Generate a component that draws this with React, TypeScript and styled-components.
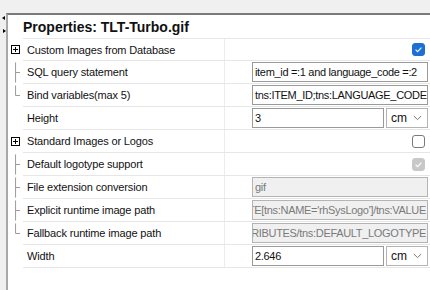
import React from "react";
import styled, { createGlobalStyle } from "styled-components";

const GlobalStyle = createGlobalStyle`
    html, body {
        margin: 0;
        padding: 0;
        background: #f0f0f0;
        font-family: "Liberation Sans", Arial, sans-serif;
    }
`;

type Tree = "none" | "group" | "mid" | "last";

interface IRow {
    label: string;
    tree: Tree;
    kind: "check" | "text" | "unit" | "readonly" | "none";
    value?: string;
    checked?: boolean;
    disabled?: boolean;
    alignEnd?: boolean;
}

const rows: IRow[] = [
    { label: "Custom Images from Database", tree: "group", kind: "check", checked: true },
    { label: "SQL query statement", tree: "mid", kind: "text", value: "item_id =:1 and language_code =:2" },
    { label: "Bind variables(max 5)", tree: "last", kind: "text", value: "tns:ITEM_ID;tns:LANGUAGE_CODE" },
    { label: "Height", tree: "none", kind: "unit", value: "3" },
    { label: "Standard Images or Logos", tree: "group", kind: "check", checked: false },
    { label: "Default logotype support", tree: "mid", kind: "check", checked: true, disabled: true },
    { label: "File extension conversion", tree: "mid", kind: "readonly", value: "gif" },
    {
        label: "Explicit runtime image path",
        tree: "mid",
        kind: "readonly",
        value: "//tns:ATTRIBUTE[tns:NAME='rhSysLogo']/tns:VALUE",
        alignEnd: true,
    },
    {
        label: "Fallback runtime image path",
        tree: "last",
        kind: "readonly",
        value: "/tns:ATTRIBUTES/tns:DEFAULT_LOGOTYPE",
        alignEnd: true,
    },
    { label: "Width", tree: "none", kind: "unit", value: "2.646" },
];

const TreeMark = ({ tree }: { tree: Tree }) => {
    if (tree === "none") return null;
    if (tree === "group") {
        return (
            <svg width="9" height="9" viewBox="0 0 9 9">
                <rect x="0.5" y="0.5" width="8" height="8" fill="#fff" stroke="#000" />
                <path d="M2 4.5h5M4.5 2v5" stroke="#000" />
            </svg>
        );
    }
    return (
        <svg width="16" height="23" viewBox="0 0 16 23">
            <path
                d={tree === "mid" ? "M7.5 0v23M7.5 11.5h5" : "M7.5 0v11.5h5"}
                stroke="#8c8c8c"
                fill="none"
            />
        </svg>
    );
};

const CheckBox = ({ checked, disabled }: { checked?: boolean; disabled?: boolean }) => (
    <Check $checked={checked} $disabled={disabled}>
        {checked && (
            <svg width="9" height="9" viewBox="0 0 9 9">
                <path d="M1.6 4.7l2 1.9 3.8-4" stroke="#fff" strokeWidth="1.1" fill="none" />
            </svg>
        )}
    </Check>
);

const UnitSelect = () => (
    <Select>
        <span>cm</span>
        <svg width="9" height="6" viewBox="0 0 9 6">
            <path d="M0.8 1l3.7 3.6L8.2 1" stroke="#777" fill="none" />
        </svg>
    </Select>
);

const ValueContent = ({ row }: { row: IRow }) => {
    switch (row.kind) {
        case "check":
            return (
                <EndAligned>
                    <CheckBox checked={row.checked} disabled={row.disabled} />
                </EndAligned>
            );
        case "text":
            return <Field>{row.value}</Field>;
        case "readonly":
            return (
                <Field $readonly $alignEnd={row.alignEnd}>
                    <span>{row.value}</span>
                </Field>
            );
        case "unit":
            return (
                <UnitWrap>
                    <Field>{row.value}</Field>
                    <UnitSelect />
                </UnitWrap>
            );
        default:
            return null;
    }
};

const App = () => {
    return (
        <Root>
            <GlobalStyle />
            <TopBar />
            <Body>
                <SideStrip>
                    <Arrow $dir="left" />
                    <Arrow $dir="right" />
                </SideStrip>
                <Panel>
                    <Title>Properties: TLT-Turbo.gif</Title>
                    <Grid>
                        {rows.map((row) => (
                            <Row key={row.label}>
                                <Gutter>
                                    <TreeMark tree={row.tree} />
                                </Gutter>
                                <RowBody>
                                    <Label>{row.label}</Label>
                                    <Value>
                                        <ValueContent row={row} />
                                    </Value>
                                </RowBody>
                            </Row>
                        ))}
                    </Grid>
                </Panel>
            </Body>
        </Root>
    );
};

export default App;

const Root = styled.div`
    width: 430px;
    height: 290px;
    display: flex;
    flex-direction: column;
    overflow: hidden;
    font-size: 11px;
    letter-spacing: -0.15px;
    color: #111;
`;

const TopBar = styled.div`
    height: 13px;
    background: #f0f0f0;
`;

const Body = styled.div`
    flex: 1;
    min-width: 0;
    display: flex;
`;

const SideStrip = styled.div`
    width: 6px;
    flex-shrink: 0;
    display: flex;
    flex-direction: column;
    align-items: flex-start;
    gap: 9px;
    padding: 3px 0 0 1px;
    box-sizing: border-box;
    background: #f0f0f0;
`;

const Arrow = styled.div<{ $dir: "left" | "right" }>`
    width: 0;
    height: 0;
    border-top: 2.5px solid transparent;
    border-bottom: 2.5px solid transparent;
    ${(p) =>
        p.$dir === "left"
            ? "border-right: 3px solid #000; margin-left: 1px;"
            : "border-left: 3px solid #000; margin-left: 2px;"}
`;

const Panel = styled.div`
    flex: 1;
    min-width: 0;
    background: #fff;
    border-top: 2px solid #7a7a7a;
    border-left: 2px solid #a8a8a8;
    display: flex;
    flex-direction: column;
`;

const Title = styled.div`
    height: 23px;
    padding-left: 15px;
    display: flex;
    align-items: center;
    font-size: 14px;
    font-weight: bold;
    letter-spacing: 0;
    color: #111;
`;

const Grid = styled.div`
    display: flex;
    flex-direction: column;
`;

const Row = styled.div`
    display: flex;
    height: 23px;

    &:first-child > div:last-child {
        border-top: 1px solid #e6e6e6;
    }
`;

const Gutter = styled.div`
    width: 15px;
    flex-shrink: 0;
    display: flex;
    align-items: center;
    justify-content: flex-start;
    padding-left: 1px;
    box-sizing: border-box;

    & svg[width="9"] {
        margin-left: 2px;
    }
`;

const RowBody = styled.div`
    flex: 1;
    min-width: 0;
    display: flex;
    border-bottom: 1px solid #e6e6e6;
`;

const Label = styled.div`
    width: 202px;
    flex-shrink: 0;
    box-sizing: border-box;
    padding-left: 4px;
    display: flex;
    align-items: center;
    border-right: 1px solid #ececec;
    white-space: nowrap;
`;

const Value = styled.div`
    flex: 1;
    min-width: 0;
    display: flex;
    align-items: center;
    padding: 0 2px 0 27px;
`;

const EndAligned = styled.div`
    flex: 1;
    display: flex;
    justify-content: flex-end;
    padding-right: 3px;
`;

const Check = styled.div<{ $checked?: boolean; $disabled?: boolean }>`
    width: 13px;
    height: 13px;
    box-sizing: border-box;
    border-radius: 3px;
    display: flex;
    align-items: center;
    justify-content: center;
    background: ${(p) => (p.$disabled ? "#c8c8c8" : p.$checked ? "#1c6fd6" : "#fff")};
    border: 1px solid ${(p) => (p.$disabled ? "#c8c8c8" : p.$checked ? "#1c6fd6" : "#7a7a7a")};
`;

const Field = styled.div<{ $readonly?: boolean; $alignEnd?: boolean }>`
    flex: 1;
    min-width: 0;
    height: 20px;
    box-sizing: border-box;
    border: 1px solid ${(p) => (p.$readonly ? "#b4b4b4" : "#9a9a9a")};
    background: ${(p) => (p.$readonly ? "#f0f0f0" : "#fff")};
    color: ${(p) => (p.$readonly ? "#7a7a7a" : "#111")};
    padding: 0 1px 0 2px;
    letter-spacing: -0.32px;
    display: flex;
    align-items: center;
    justify-content: ${(p) => (p.$alignEnd ? "flex-end" : "flex-start")};
    white-space: nowrap;
    overflow: hidden;

    & span {
        flex-shrink: 0;
    }
`;

const UnitWrap = styled.div`
    flex: 1;
    min-width: 0;
    display: flex;
    gap: 2px;
`;

const Select = styled.div`
    width: 42px;
    flex-shrink: 0;
    height: 20px;
    box-sizing: border-box;
    border: 1px solid #b4b4b4;
    background: #fff;
    display: flex;
    align-items: center;
    justify-content: space-between;
    padding: 0 5px 0 4px;
    font-size: 12px;
    letter-spacing: 0;
`;
